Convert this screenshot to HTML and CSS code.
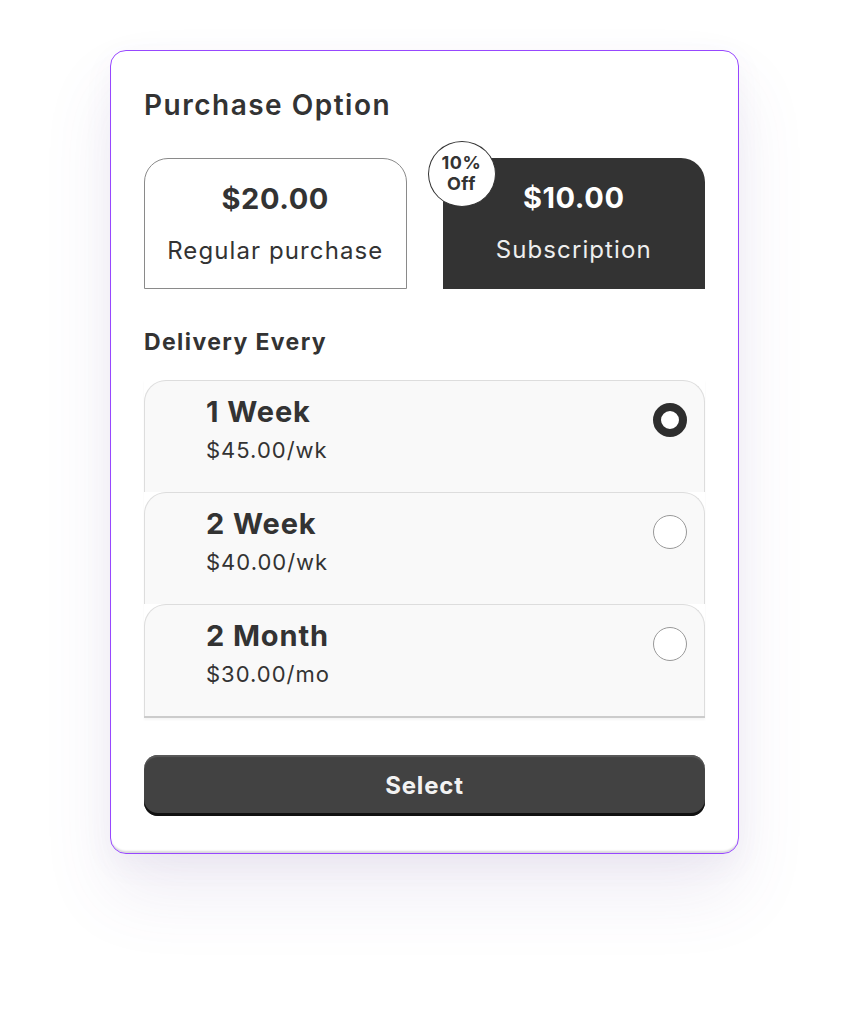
FILE: index.html
```html
<!DOCTYPE html>
<html lang="en">
<head>
<meta charset="utf-8">
<title>Purchase Option</title>
<link rel="stylesheet" href="styles.css">
</head>
<body>
<div class="page">
  <div class="card">
    <h1 class="title">Purchase Option</h1>
    <div class="options">
      <div class="option option-regular">
        <div class="price">$20.00</div>
        <div class="label">Regular purchase</div>
      </div>
      <div class="option option-sub">
        <div class="badge"><span>10%</span><span>Off</span></div>
        <div class="price">$10.00</div>
        <div class="label">Subscription</div>
      </div>
    </div>
    <h2 class="subtitle">Delivery Every</h2>
    <div class="list">
      <div class="item">
        <div class="item-text">
          <div class="item-title">1 Week</div>
          <div class="item-price">$45.00/wk</div>
        </div>
        <span class="radio radio-on"></span>
      </div>
      <div class="item">
        <div class="item-text">
          <div class="item-title">2 Week</div>
          <div class="item-price">$40.00/wk</div>
        </div>
        <span class="radio"></span>
      </div>
      <div class="item">
        <div class="item-text">
          <div class="item-title">2 Month</div>
          <div class="item-price">$30.00/mo</div>
        </div>
        <span class="radio"></span>
      </div>
    </div>
    <button class="select-btn">Select</button>
  </div>
</div>
</body>
</html>
```
FILE: styles.css
```css
* { box-sizing: border-box; }
html, body { margin: 0; padding: 0; background: #ffffff; }
body { font-family: Inter, "Noto Sans", sans-serif; color: #333333; }
.page { padding: 50px 0 0 110px; min-height: 1022px; }
.card {
  width: 629px;
  height: 804px;
  border: 1px solid #9747ff;
  border-radius: 16px;
  background: #ffffff;
  padding: 36px 33px 0 33px;
  box-shadow: inset 0 -3px 2px -1px #d8d8d8, 0 40px 70px rgba(110, 80, 160, 0.10), 0 10px 30px rgba(110, 80, 160, 0.06);
}
.title {
  margin: 0;
  font-size: 28px;
  font-weight: 600;
  letter-spacing: 1.5px;
  line-height: 36px;
  color: #333333;
}
.options {
  display: grid;
  grid-template-columns: 1fr 1fr;
  gap: 36px;
  margin-top: 35px;
}
.option {
  position: relative;
  height: 131px;
  display: flex;
  flex-direction: column;
  align-items: center;
  padding-top: 22px;
}
.option-regular {
  border: 1px solid #8a8a8a;
  border-radius: 24px 24px 0 0;
  color: #333333;
}
.option-sub {
  background: #333333;
  border-radius: 24px 24px 0 0;
  color: #ffffff;
}
.price { font-size: 29px; font-weight: 700; letter-spacing: 0.6px; line-height: 36px; }
.label { font-size: 24px; font-weight: 400; letter-spacing: 1.1px; line-height: 30px; margin-top: 19px; }
.option-sub .label { color: #eeeeee; }
.badge {
  position: absolute;
  left: -15px;
  top: -17px;
  width: 68px;
  height: 66px;
  border-radius: 50%;
  background: #ffffff;
  border: 1.5px solid #333333;
  color: #333333;
  display: flex;
  flex-direction: column;
  align-items: center;
  justify-content: center;
  font-size: 18px;
  font-weight: 700;
  letter-spacing: 0.6px;
  line-height: 21px;
  padding-bottom: 2px;
}
.subtitle {
  margin: 38px 0 0 0;
  font-size: 23px;
  font-weight: 700;
  letter-spacing: 1.4px;
  line-height: 30px;
  color: #333333;
}
.list {
  margin-top: 23px;
  border-bottom: 2px solid #cccccc;
  box-shadow: 0 2px 2px rgba(0,0,0,0.04);
}
.item {
  height: 112px;
  background: #f9f9f9;
  border: 1px solid #dddddd;
  border-bottom: none;
  border-radius: 22px 22px 0 0;
  display: flex;
  justify-content: space-between;
  align-items: flex-start;
  padding: 14px 17px 0 61px;
}
.item-title { font-size: 29px; font-weight: 700; letter-spacing: 0.9px; line-height: 34px; color: #333333; }
.item-price { font-size: 22px; font-weight: 400; letter-spacing: 1px; line-height: 28px; margin-top: 7px; color: #333333; }
.radio {
  width: 34px;
  height: 34px;
  border-radius: 50%;
  border: 1px solid #999999;
  background: #ffffff;
  margin-top: 8px;
  flex: none;
}
.radio-on { border: 8px solid #2e2e2e; }
.select-btn {
  display: block;
  width: 100%;
  height: 61px;
  margin-top: 37px;
  border: none;
  border-radius: 14px;
  background: #424242;
  box-shadow: inset 0 -3px 0 #111111, inset 0 2px 1px #5a5a5a;
  color: #f2f2f2;
  font-family: Inter, "Noto Sans", sans-serif;
  font-size: 24px;
  font-weight: 700;
  letter-spacing: 0.8px;
  cursor: pointer;
}
```
